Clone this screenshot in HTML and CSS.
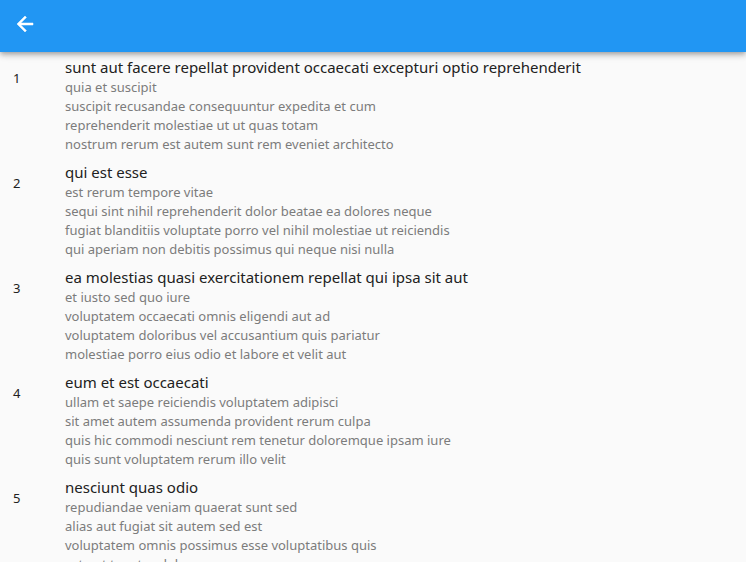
FILE: index.html
```html
<!DOCTYPE html>
<html lang="en">
<head>
<meta charset="utf-8">
<title>Posts</title>
<link rel="stylesheet" href="styles.css">
</head>
<body>
<header class="app-bar">
  <button class="back" type="button" aria-label="Back">
    <svg viewBox="0 0 24 24" width="24" height="24" aria-hidden="true"><path fill="currentColor" stroke="currentColor" stroke-width="0.5" d="M20 11H7.83l5.59-5.59L12 4l-8 8 8 8 1.41-1.41L7.83 13H20v-2z"/></svg>
  </button>
</header>
<main class="posts">
  <article class="post">
    <span class="number">1</span>
    <div class="content">
      <h2 class="title">sunt aut facere repellat provident occaecati excepturi optio reprehenderit</h2>
      <p class="body">quia et suscipit
suscipit recusandae consequuntur expedita et cum
reprehenderit molestiae ut ut quas totam
nostrum rerum est autem sunt rem eveniet architecto</p>
    </div>
  </article>
  <article class="post">
    <span class="number">2</span>
    <div class="content">
      <h2 class="title">qui est esse</h2>
      <p class="body">est rerum tempore vitae
sequi sint nihil reprehenderit dolor beatae ea dolores neque
fugiat blanditiis voluptate porro vel nihil molestiae ut reiciendis
qui aperiam non debitis possimus qui neque nisi nulla</p>
    </div>
  </article>
  <article class="post">
    <span class="number">3</span>
    <div class="content">
      <h2 class="title">ea molestias quasi exercitationem repellat qui ipsa sit aut</h2>
      <p class="body">et iusto sed quo iure
voluptatem occaecati omnis eligendi aut ad
voluptatem doloribus vel accusantium quis pariatur
molestiae porro eius odio et labore et velit aut</p>
    </div>
  </article>
  <article class="post">
    <span class="number">4</span>
    <div class="content">
      <h2 class="title">eum et est occaecati</h2>
      <p class="body">ullam et saepe reiciendis voluptatem adipisci
sit amet autem assumenda provident rerum culpa
quis hic commodi nesciunt rem tenetur doloremque ipsam iure
quis sunt voluptatem rerum illo velit</p>
    </div>
  </article>
  <article class="post">
    <span class="number">5</span>
    <div class="content">
      <h2 class="title">nesciunt quas odio</h2>
      <p class="body">repudiandae veniam quaerat sunt sed
alias aut fugiat sit autem sed est
voluptatem omnis possimus esse voluptatibus quis
est aut tenetur dolor neque</p>
    </div>
  </article>
</main>
</body>
</html>
```
FILE: styles.css
```css
* {
  box-sizing: border-box;
}

body {
  margin: 0;
  height: 100vh;
  display: flex;
  flex-direction: column;
  background: #fafafa;
  color: #212121;
  font-family: "Noto Sans", "Open Sans", sans-serif;
}

.app-bar {
  position: relative;
  z-index: 1;
  flex: none;
  display: flex;
  align-items: center;
  height: 52px;
  padding: 0 9px 4px;
  background: #2196f3;
  color: #fff;
  box-shadow: 0 2px 4px -1px rgba(0, 0, 0, 0.2), 0 4px 5px rgba(0, 0, 0, 0.14), 0 1px 10px rgba(0, 0, 0, 0.12);
}

.back {
  display: flex;
  padding: 4px;
  border: 0;
  background: none;
  color: inherit;
  cursor: pointer;
}

.posts {
  flex: 1;
  min-height: 0;
  padding-top: 1px;
  overflow-y: auto;
  scrollbar-width: none;
}

.post {
  display: grid;
  grid-template-columns: 52px 1fr;
  padding: 4px 13px;
}

.number {
  padding-top: 12px;
  font-size: 13px;
  line-height: 19px;
}

.title {
  margin: 0;
  font-size: 15px;
  font-weight: 400;
  line-height: 21px;
}

.body {
  margin: 0;
  color: #7c7c7c;
  font-size: 13px;
  line-height: 19px;
  white-space: pre-line;
}
```
